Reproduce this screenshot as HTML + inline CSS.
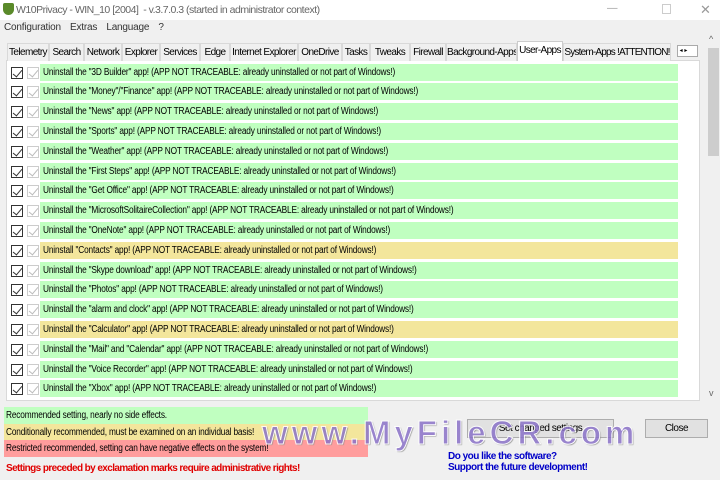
<!DOCTYPE html><html><head><style>
*{margin:0;padding:0;box-sizing:border-box}
body{width:720px;height:480px;background:#f0f0f0;font-family:"Liberation Sans",sans-serif;font-size:11px;position:relative;overflow:hidden;color:#000}
.a{position:absolute}
.title{left:0;top:0;width:720px;height:20px;background:#fff;font-size:10.5px;color:#666}
.tab{position:absolute;top:43px;height:18px;line-height:17px;font-size:10px;letter-spacing:-0.6px;text-align:center;border:1px solid #d9d9d9;border-bottom:none;background:#f0f0f0;white-space:nowrap;overflow:hidden}
.row{position:absolute;left:40px;width:638px;height:17px;line-height:17px;font-size:10px;padding-left:3px;background:#c0ffc0;white-space:nowrap}
.s{display:inline-block;transform:scaleX(0.83);transform-origin:left;letter-spacing:-0.2px}
.y{background:#f3e69c}
.cb{position:absolute;left:11px;width:12px;height:12px;border:1px solid #333;background:#fff}
.cb::after{content:"";position:absolute;left:3px;top:0px;width:4px;height:8px;border-right:1.5px solid #333;border-bottom:1.5px solid #333;transform:rotate(40deg)}
.cb2{position:absolute;left:27px;width:12px;height:12px;border:1px solid #ccc;background:#fff}
.cb2::after{content:"";position:absolute;left:3px;top:0px;width:4px;height:8px;border-right:1.5px solid #bbb;border-bottom:1.5px solid #bbb;transform:rotate(40deg)}
.leg{position:absolute;left:4px;width:364px;height:17px;line-height:17px;font-size:10px;padding-left:2px;white-space:nowrap}
.leg .s{transform:scaleX(0.83)}
.btn{position:absolute;top:419px;height:19px;border:1px solid #adadad;background:#e1e1e1;font-size:10px;text-align:center;line-height:17px;letter-spacing:-0.5px}
</style></head><body>
<div class="a title"><span class="a" style="left:3px;top:3px;width:11px;height:12px;background:#5a8a2a;border-radius:2px 2px 6px 6px"></span><span class="a" style="left:16px;top:4px;letter-spacing:-0.5px">W10Privacy - WIN_10 [2004]&nbsp; - v.3.7.0.3 (started in administrator context)</span>
<span class="a" style="left:607px;top:2px;color:#999">—</span><span class="a" style="left:662px;top:4px;width:9px;height:10px;border:1px solid #ccc"></span><span class="a" style="left:700px;top:2px;color:#999;font-size:13px">✕</span></div>
<div class="a" style="left:4px;top:22px;font-size:10px;color:#333;letter-spacing:-0.2px;word-spacing:2px">Configuration&nbsp; Extras&nbsp; Language&nbsp; ?</div>
<div class="a" style="left:6px;top:60px;width:694px;height:341px;background:#fff;border:1px solid #d9d9d9"></div>
<div class="tab" style="left:7px;width:42px">Telemetry</div>
<div class="tab" style="left:49px;width:35px">Search</div>
<div class="tab" style="left:84px;width:38px">Network</div>
<div class="tab" style="left:122px;width:38px">Explorer</div>
<div class="tab" style="left:160px;width:40px">Services</div>
<div class="tab" style="left:200px;width:30px">Edge</div>
<div class="tab" style="left:230px;width:68px">Internet Explorer</div>
<div class="tab" style="left:298px;width:44px">OneDrive</div>
<div class="tab" style="left:342px;width:28px">Tasks</div>
<div class="tab" style="left:370px;width:40px">Tweaks</div>
<div class="tab" style="left:410px;width:36px">Firewall</div>
<div class="tab" style="left:446px;width:71px">Background-Apps</div>
<div class="tab" style="left:517px;width:46px;top:41px;height:20px;background:#fff;border-color:#ccc">User-Apps</div>
<div class="tab" style="left:563px;width:108px;letter-spacing:-0.8px">System-Apps !ATTENTION!</div>
<div class="a" style="left:677px;top:45px;width:21px;height:12px;border:1px solid #aaa;background:#fff;font-size:6px;line-height:10px">&nbsp;◂ ▸</div>
<div class="a" style="left:706px;top:33px;width:14px;height:368px;background:#f0f0f0"></div>
<div class="a" style="left:708px;top:48px;width:11px;height:108px;background:#cdcdcd"></div>
<div class="a" style="left:709px;top:34px;font-size:9px;color:#666">^</div>
<div class="a" style="left:709px;top:388px;font-size:9px;color:#666">v</div>

<div id="rows"></div>
<script>
var t=['Uninstall the "3D Builder" app! (APP NOT TRACEABLE: already uninstalled or not part of Windows!)',
'Uninstall the "Money"/"Finance" app! (APP NOT TRACEABLE: already uninstalled or not part of Windows!)',
'Uninstall the "News" app! (APP NOT TRACEABLE: already uninstalled or not part of Windows!)',
'Uninstall the "Sports" app! (APP NOT TRACEABLE: already uninstalled or not part of Windows!)',
'Uninstall the "Weather" app! (APP NOT TRACEABLE: already uninstalled or not part of Windows!)',
'Uninstall the "First Steps" app! (APP NOT TRACEABLE: already uninstalled or not part of Windows!)',
'Uninstall the "Get Office" app! (APP NOT TRACEABLE: already uninstalled or not part of Windows!)',
'Uninstall the "MicrosoftSolitaireCollection" app! (APP NOT TRACEABLE: already uninstalled or not part of Windows!)',
'Uninstall the "OneNote" app! (APP NOT TRACEABLE: already uninstalled or not part of Windows!)',
'Uninstall "Contacts" app! (APP NOT TRACEABLE: already uninstalled or not part of Windows!)',
'Uninstall the "Skype download" app! (APP NOT TRACEABLE: already uninstalled or not part of Windows!)',
'Uninstall the "Photos" app! (APP NOT TRACEABLE: already uninstalled or not part of Windows!)',
'Uninstall the "alarm and clock" app! (APP NOT TRACEABLE: already uninstalled or not part of Windows!)',
'Uninstall the "Calculator" app! (APP NOT TRACEABLE: already uninstalled or not part of Windows!)',
'Uninstall the "Mail" and "Calendar" app! (APP NOT TRACEABLE: already uninstalled or not part of Windows!)',
'Uninstall the "Voice Recorder" app! (APP NOT TRACEABLE: already uninstalled or not part of Windows!)',
'Uninstall the "Xbox" app! (APP NOT TRACEABLE: already uninstalled or not part of Windows!)'];
var h='';for(var i=0;i<t.length;i++){var y=Math.round(63.5+i*19.8);var c=(i==9||i==13)?' y':'';
h+='<div class="cb" style="top:'+(y+3)+'px"></div><div class="cb2" style="top:'+(y+3)+'px"></div><div class="row'+c+'" style="top:'+y+'px"><span class="s">'+t[i]+'</span></div>';}
document.getElementById('rows').innerHTML=h;
</script>
<div class="leg" style="top:407px;background:#c0ffc0"><span class="s">Recommended setting, nearly no side effects.</span></div>
<div class="leg" style="top:424px;background:#f3e69c"><span class="s">Conditionally recommended, must be examined on an individual basis!</span></div>
<div class="leg" style="top:440px;background:#ff9d9d"><span class="s">Restricted recommended, setting can have negative effects on the system!</span></div>
<div class="a" style="left:6px;top:463px;color:#e00000;font-weight:bold;font-size:10px;letter-spacing:-0.6px">Settings preceded by exclamation marks require administrative rights!</div>
<div class="btn" style="left:467px;width:147px">Set changed settings</div>
<div class="btn" style="left:645px;width:63px">Close</div>
<div class="a" style="left:262px;top:414px;font-size:33px;font-weight:bold;color:#8a72c8;opacity:0.85;letter-spacing:4px;-webkit-text-stroke:1px #fff;text-shadow:1px 1px 1px #888">www.MyFileCR.com</div>
<div class="a" style="left:448px;top:451px;color:#0000c8;font-weight:bold;font-size:10px;line-height:11px;letter-spacing:-0.5px">Do you like the software?<br>Support the future development!</div>
</body></html>
